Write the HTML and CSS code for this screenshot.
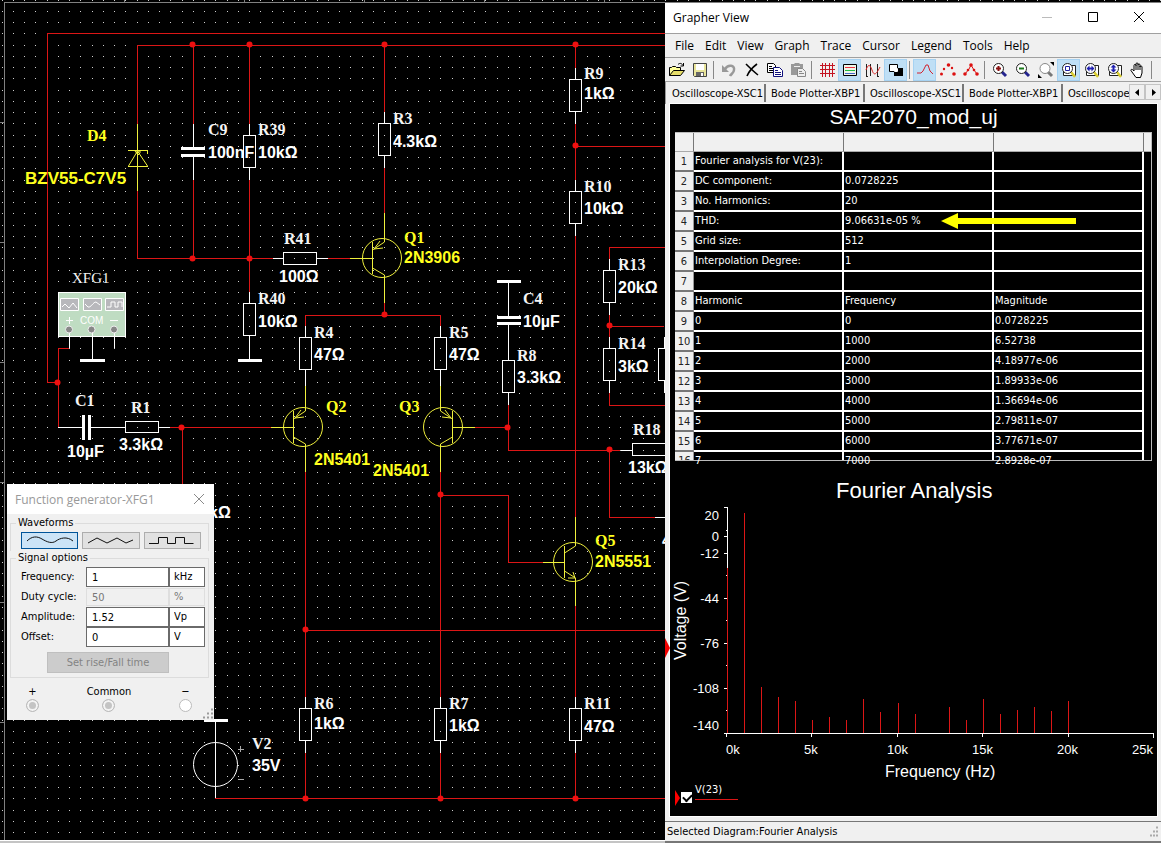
FILE: index.html
```html
<!DOCTYPE html>
<html lang="en">
<head>
<meta charset="utf-8">
<title>Grapher View</title>
<link rel="stylesheet" href="styles.css">
</head>
<body>
<main class="desktop">
<svg class="schematic" role="img" aria-label="Circuit schematic">
  <defs>
    <pattern id="dots" x="2" y="0" width="45" height="45" patternUnits="userSpaceOnUse">
      <path class="dot" d="M0 .5h1M11 .5h1M22 .5h1M33 .5h1M0 11.5h1M11 11.5h1M22 11.5h1M33 11.5h1M0 22.5h1M11 22.5h1M22 22.5h1M33 22.5h1M0 33.5h1M11 33.5h1M22 33.5h1M33 33.5h1"/>
    </pattern>
    <g id="res"><path d="M.5 0v11M.5 44v12"/><rect x="-5.500" y="11.500" width="12" height="32" fill="none"/></g>
    <g id="pnp"><circle cx="-2" cy="0" r="19.500"/><path d="M-11.500 -16v32M-34 .5h22M.5 -28v12l-12 8M-11.500 10l12 7v28M-4 -17l-6 8 9 -1"/></g>
    <g id="node"><circle r="3"/></g>
  </defs>
  <rect width="100%" height="100%" fill="url(#dots)"/>
  <path class="sheet" d="M4.500 843V2.500H1161M124.500 0v2M244.500 0v2M364.500 0v2M484.500 0v2M604.500 0v2M0 122.500h4M0 242.500h4M0 362.500h4M0 482.500h4M0 602.500h4M0 722.500h4"/>
  <g class="wire">
    <path d="M665 33.500H47.500V382.500H58M665 45.500H137.500V124M137.500 191v67.500H273M328 258.500h22M193.500 45v79M193.500 180v78M249.500 45v79M249.500 180v112M384.500 45v67M384.500 168v45M575.500 45v23M575.500 124v56M575.500 236v281M575.500 146.500H665"/>
    <path d="M384.500 303v12M305.500 327v-12H440.500v12M69 348.500H58.500V427M170 427.500H273M182.500 427V520M475 427.500h33M508.500 404v46H620M609.500 450v67H656"/>
    <path d="M305.500 472v225M305.500 753v45M440.500 472v225M440.500 753v45M440 495.500h68V562.500h35M575.500 606v91M575.500 753v45M305 630.500H665M215 798.500H665M665 247.500h-55.500v12M609.500 315v22M609.500 393v12H665M609 326.500h55"/>
  </g>
  <g class="part">
    <use href="#res" x="249" y="124"/><use href="#res" x="249" y="292"/><use href="#res" x="384" y="112"/>
    <use href="#res" x="575" y="68"/><use href="#res" x="575" y="180"/><use href="#res" x="305" y="326"/>
    <use href="#res" x="440" y="326"/><use href="#res" x="508" y="349"/><use href="#res" x="609" y="259"/>
    <use href="#res" x="609" y="337"/><use href="#res" x="664" y="337"/><use href="#res" x="305" y="697"/>
    <use href="#res" x="440" y="697"/><use href="#res" x="575" y="697"/>
    <path d="M273 258.500h10M317 258.500h11M58 427.500h24M91 427.500h34M159 427.500h11M621 450.500h11M655 517.500h10M193.500 124v23M193.500 157v23M249.500 346v14M508.500 282v34M508.500 325v25M305.500 380v6M440.500 380v6M215.500 720v78"/>
    <path d="M283.500 252.500h33v12h-33zM125.500 421.500h33v11h-33zM632.500 443.500h40v12h-40z"/>
  </g>
  <path class="plate" d="M181 148.500h24M181 155.500h24M238 360.500h24M497 281.500h24M497 317.500h24M497 323.500h24M83.500 415v25M89.500 415v25M80 360.500h25M204 720.500h24"/>
  <circle class="source" cx="215.500" cy="764.500" r="22"/>
  <path class="polarity" d="M238 749.500h6M240.500 746v6M238 779.500h6"/>
  <g class="active">
    <path class="crisp" d="M137.500 124v67M128 150.500h20M147.500 150v4M128 166.500h20M305.500 386v16M440.500 386v16M384.500 213v18M575.500 590v16"/>
    <path d="M128.500 166l9-15 10 15M135 151h5v2l-2 2z"/>
    <use href="#pnp" x="384" y="258"/><use href="#pnp" x="305" y="427"/>
    <use href="#pnp" transform="translate(441 427) scale(-1 1)"/>
    <circle cx="573" cy="562" r="19.500"/>
    <path d="M564.500 546v32M543 562.500h21M575.500 517v29l-11 7M564.500 571l11 7v14M568 578l7 0-2-6"/>
  </g>
  <g class="nodes">
    <use href="#node" x="192.500" y="44.500"/><use href="#node" x="249.500" y="44.500"/><use href="#node" x="384.500" y="44.500"/><use href="#node" x="575.500" y="44.500"/>
    <use href="#node" x="192.500" y="258.500"/><use href="#node" x="249.500" y="258.500"/><use href="#node" x="575.500" y="145.500"/><use href="#node" x="384.500" y="314.500"/>
    <use href="#node" x="609.500" y="325.500"/><use href="#node" x="57.500" y="382.500"/><use href="#node" x="181.500" y="427.500"/><use href="#node" x="507.500" y="427.500"/>
    <use href="#node" x="609.500" y="449.500"/><use href="#node" x="440.500" y="494.500"/><use href="#node" x="305.500" y="629.500"/>
    <use href="#node" x="305.500" y="798.500"/><use href="#node" x="440.500" y="798.500"/><use href="#node" x="575.500" y="798.500"/>
  </g>
  <g class="generator">
    <rect x="58.500" y="292.500" width="67" height="44" fill="#bfdcc2"/>
    <path class="screen" d="M60.500 298.500h18v12h-18zM83.500 298.500h18v12h-18zM105.500 298.500h18v12h-18z"/>
    <path d="M62 307l3-3 4 4 4-5 4 5M85 304l3 3c3 1 5-5 8-5l4 3M107 307h4v-5h4v5h3v-5h4v5M66 320.500h7M69.500 317v7M110 320.500h8"/>
    <path d="M69.500 331v17M92.500 331v29M114.500 331v17"/>
    <g class="pins"><circle cx="69" cy="329.500" r="3.500"/><circle cx="91.500" cy="329.500" r="3.500"/><circle cx="114" cy="329.500" r="3.500"/></g>
    <text x="80" y="324" class="com">COM</text>
  </g>
  <g class="names">
    <text x="208" y="135">C9</text><text x="258" y="135">R39</text><text x="284" y="244">R41</text><text x="393" y="124">R3</text>
    <text x="584" y="79">R9</text><text x="584" y="192">R10</text><text x="258" y="304">R40</text><text x="314" y="338">R4</text>
    <text x="449" y="338">R5</text><text x="523" y="304">C4</text><text x="517" y="361">R8</text><text x="618" y="270">R13</text>
    <text x="618" y="349">R14</text><text x="633" y="435">R18</text><text x="75" y="406">C1</text><text x="131" y="413">R1</text>
    <text x="314" y="709">R6</text><text x="449" y="709">R7</text><text x="584" y="709">R11</text><text x="252" y="749">V2</text>
    <text x="72" y="283" class="light">XFG1</text>
    <g class="hot"><text x="87" y="141">D4</text><text x="404" y="243">Q1</text><text x="326" y="412">Q2</text><text x="399" y="412">Q3</text><text x="595" y="546">Q5</text></g>
  </g>
  <g class="values">
    <text x="208" y="158">100nF</text><text x="258" y="158">10kΩ</text><text x="279" y="282">100Ω</text><text x="393" y="147">4.3kΩ</text>
    <text x="584" y="99">1kΩ</text><text x="584" y="214">10kΩ</text><text x="258" y="327">10kΩ</text><text x="314" y="360">47Ω</text>
    <text x="449" y="360">47Ω</text><text x="523" y="327">10µF</text><text x="517" y="383">3.3kΩ</text><text x="618" y="293">20kΩ</text>
    <text x="618" y="372">3kΩ</text><text x="628" y="473">13kΩ</text><text x="67" y="457">10µF</text><text x="119" y="450">3.3kΩ</text>
    <text x="209" y="518">kΩ</text><text x="314" y="729">1kΩ</text><text x="449" y="731">1kΩ</text><text x="584" y="732">47Ω</text><text x="252" y="771">35V</text>
    <text x="662" y="546">4</text>
    <g class="hot"><text x="25" y="184" class="wide">BZV55-C7V5</text><text x="404" y="263">2N3906</text><text x="314" y="465">2N5401</text><text x="373" y="476">2N5401</text><text x="595" y="567">2N5551</text></g>
  </g>
</svg>
<div class="scroll-edge"></div>

<section class="panel" aria-label="Function generator">
  <header class="panel-title"><span>Function generator-XFG1</span>
    <button class="bare" aria-label="Close"><svg width="12" height="12"><path d="M1 1l10 10M11 1L1 11" stroke="#8a8a8a" fill="none"/></svg></button>
  </header>
  <div class="panel-body">
    <fieldset class="waves"><legend>Waveforms</legend>
      <div class="wave-row">
        <button class="wave on" aria-label="Sine"><svg width="46" height="9"><path d="M0 5c5-5 10-5 15-2s10 5 14 2 11-5 17 0"/></svg></button>
        <button class="wave" aria-label="Triangle"><svg width="46" height="9"><path d="M0 7l9-5 10 5 10-5 9 5 7-3"/></svg></button>
        <button class="wave" aria-label="Square"><svg width="46" height="9"><path d="M0 7.500h9.500v-6h9v6h8v-6h9v6h9"/></svg></button>
      </div>
    </fieldset>
    <fieldset class="options"><legend>Signal options</legend>
      <div class="field"><label for="freq">Frequency:</label><input id="freq" value="1"><input class="unit" aria-label="Frequency unit" value="kHz"></div>
      <div class="field"><label for="duty">Duty cycle:</label><input id="duty" value="50" disabled><input class="unit" aria-label="Duty unit" value="%" disabled></div>
      <div class="field"><label for="amp">Amplitude:</label><input id="amp" value="1.52"><input class="unit" aria-label="Amplitude unit" value="Vp"></div>
      <div class="field"><label for="offs">Offset:</label><input id="offs" value="0"><input class="unit" aria-label="Offset unit" value="V"></div>
      <button class="rise" disabled>Set rise/Fall time</button>
    </fieldset>
    <div class="terminals">
      <label>+<input type="radio" name="plus" checked></label>
      <label>Common<input type="radio" name="common" checked></label>
      <label>−<input type="radio" name="minus"></label>
    </div>
  </div>
  <svg class="grip" width="12" height="12"><path d="M9 1.500h2M5 5.500h2M9 5.500h2M1 9.500h2M5 9.500h2M9 9.500h2" stroke="#9a9a9a" stroke-width="2"/></svg>
</section>

<section class="grapher" aria-label="Grapher View">
  <header class="titlebar"><h1>Grapher View</h1>
    <button class="bare" aria-label="Minimize"><svg width="12" height="12"><path d="M1 6.500h10" stroke="#bbb"/></svg></button>
    <button class="bare" aria-label="Maximize"><svg width="12" height="12"><path d="M1.500 1.500h9v9h-9z" stroke="#000" fill="none"/></svg></button>
    <button class="bare" aria-label="Close"><svg width="12" height="12"><path d="M1 1l10 10M11 1L1 11" stroke="#000" fill="none"/></svg></button>
  </header>
  <nav class="menu"><button class="bare">File</button><button class="bare">Edit</button><button class="bare">View</button><button class="bare">Graph</button><button class="bare">Trace</button><button class="bare">Cursor</button><button class="bare">Legend</button><button class="bare">Tools</button><button class="bare">Help</button></nav>
  <div class="toolbar">
    <button class="tool" aria-label="Open"><svg viewBox="0 0 16 16"><path d="M.5 13.500v-8h2l1-1h3l1 1h4v3" fill="#ffff9c" stroke="#000"/><path d="M.5 13.500l4-5h11l-4 5z" fill="#e6de6a" stroke="#000"/><path d="M9 2.500c2-2 4-1 5 1M14.500 1v3h-3" fill="none" stroke="#000"/></svg></button>
    <button class="tool" aria-label="Save"><svg viewBox="0 0 16 16"><path d="M1.500 1.500h13v13h-12l-1-1z" fill="#e9e59a" stroke="#444"/><path d="M4 2h8v6H4z" fill="#fff"/><path d="M4 10h8v4H4z" fill="#666"/><path d="M9 11h2v3H9z" fill="#fff"/></svg></button>
    <i class="sep"></i>
    <button class="tool" aria-label="Undo"><svg viewBox="0 0 16 16"><path d="M4 7c3-5 10-4 9 1 0 3-3 4-4 6" fill="none" stroke="#999" stroke-width="2.500"/><path d="M1 3v7h7z" fill="#999"/></svg></button>
    <button class="tool" aria-label="Delete"><svg viewBox="0 0 16 16"><path d="M2 2c4 4 7 7 12 11M13 2C9 5 5 9 3 14" fill="none" stroke="#000" stroke-width="1.600"/></svg></button>
    <button class="tool" aria-label="Copy"><svg viewBox="0 0 16 16"><path d="M.5 1.500h6l2 2v7h-8z" fill="#fff" stroke="#000"/><path d="M2 4.500h3M2 6.500h4M2 8.500h4" stroke="#000"/><path d="M6.500 5.500h6l3 3v6h-9z" fill="#fff" stroke="#10107c"/><path d="M8 8.500h3M8 10.500h6M8 12.500h6" stroke="#10107c"/></svg></button>
    <button class="tool" aria-label="Paste"><svg viewBox="0 0 16 16"><path d="M1 2h3l1-1h4l1 1h3v11H1z" fill="#999"/><path d="M4 4.500h6" stroke="#eee"/><path d="M7.500 6.500h5l3 3v5h-8z" fill="#eee" stroke="#888"/><path d="M9 9.500h3M9 11.500h5" stroke="#888"/></svg></button>
    <i class="sep"></i>
    <button class="tool" aria-label="Grid"><svg viewBox="0 0 16 16"><path d="M3.500 1v14M6.500 1v14M10.500 1v14M13.500 1v14M1 3.500h15M1 7.500h15M1 11.500h15" stroke="#c41422"/></svg></button>
    <button class="tool on" aria-label="Legend"><svg viewBox="0 0 16 16"><path d="M1.500 2.500h13v11h-13z" fill="#eef6e8" stroke="#000"/><path d="M3 5.500h10" stroke="#e34"/><path d="M3 8.500h10" stroke="#2b4"/><path d="M3 11.500h10" stroke="#46c"/></svg></button>
    <button class="tool" aria-label="Cursors"><svg viewBox="0 0 16 16"><path d="M1.500 2v12M5.500 2v12M12.500 2v12M1 14.500h2M12 14.500h2" stroke="#222"/><path d="M1 8c2-6 4-6 6 0s4 5 8-3" fill="none" stroke="#d22"/></svg></button>
    <button class="tool on" aria-label="Black and white"><svg viewBox="0 0 16 16"><path d="M6 6h9v8H6z"/><path d="M1.500 2.500h8v7h-8z" fill="#fff" stroke="#000"/><path d="M6.500 6.500h3v3h-3z" fill="none" stroke="#fff"/></svg></button>
    <i class="sep"></i>
    <button class="tool on" aria-label="Line"><svg viewBox="0 0 16 16"><path d="M0 11h4l2-2 3-6h2l2 6 3 3" fill="none" stroke="#d2232e"/></svg></button>
    <button class="tool" aria-label="Points"><svg viewBox="0 0 16 16" fill="#dc1010"><circle cx="1.500" cy="12" r="1.500"/><circle cx="4" cy="7" r="1.200"/><circle cx="8.500" cy="3" r="1.800"/><circle cx="12" cy="6" r="1.200"/><circle cx="14" cy="12" r="1.800"/></svg></button>
    <button class="tool" aria-label="Line and points"><svg viewBox="0 0 16 16" fill="#dc1010"><path d="M2 12l4-5 2-4 3 5 3 4" fill="none" stroke="#dc1010"/><circle cx="2" cy="12" r="1.800"/><circle cx="5" cy="8" r="1.300"/><circle cx="8" cy="3" r="1.800"/><circle cx="11" cy="8" r="1.300"/><circle cx="14" cy="12" r="1.800"/></svg></button>
    <i class="sep"></i>
    <button class="tool" aria-label="Zoom in"><svg viewBox="0 0 16 16"><path d="M10 10l4 4" stroke="#23238e" stroke-width="3"/><circle cx="6.500" cy="6.500" r="5" fill="#fff" stroke="#222"/><path d="M4 6.500h5M6.500 4v5" stroke="#8a1010" stroke-width="2"/></svg></button>
    <button class="tool" aria-label="Zoom out"><svg viewBox="0 0 16 16"><path d="M10 10l4 4" stroke="#23238e" stroke-width="3"/><circle cx="6.500" cy="6.500" r="5" fill="#fff" stroke="#222"/><path d="M4 6.500h5" stroke="#187818" stroke-width="2"/></svg></button>
    <button class="tool" aria-label="Zoom fit"><svg viewBox="0 0 16 16"><path d="M10 10l4 4" stroke="#777" stroke-width="3"/><circle cx="7" cy="6.500" r="5" fill="#fff" stroke="#888"/><path d="M12 0h4v4zM0 12v4h4z"/></svg></button>
    <button class="tool on" aria-label="Zoom area"><svg viewBox="0 0 16 16"><path d="M2.500 9v4.500h12v-10H11" fill="#fff" stroke="#222"/><path d="M10 10l4 5" stroke="#d8cc30" stroke-width="2.500"/><circle cx="6.500" cy="6.500" r="5" fill="#fff" stroke="#222"/><path d="M4.500 4.500h4v4h-4z" fill="none" stroke="#2020a0"/></svg></button>
    <button class="tool" aria-label="Zoom horizontal"><svg viewBox="0 0 16 16"><path d="M2.500 9v4.500h12v-10H11" fill="#fff" stroke="#222"/><path d="M10 10l4 5" stroke="#d8cc30" stroke-width="2.500"/><circle cx="6.500" cy="6.500" r="5" fill="#fff" stroke="#222"/><path d="M2.500 6.500l3-3v2h2v-2l3 3-3 3v-2h-2v2z" fill="#2020b0"/></svg></button>
    <button class="tool" aria-label="Zoom vertical"><svg viewBox="0 0 16 16"><path d="M2.500 9v4.500h12v-10H11" fill="#fff" stroke="#222"/><path d="M10 10l4 5" stroke="#d8cc30" stroke-width="2.500"/><circle cx="6.500" cy="6.500" r="5" fill="#fff" stroke="#222"/><path d="M6.500 2.500l3 3h-2v2h2l-3 3-3-3h2v-2h-2z" fill="#2020b0"/></svg></button>
    <button class="tool" aria-label="Pan"><svg viewBox="0 0 16 16"><path d="M6 15.500L2 10 .8 8.200C1 7 2.500 7 4 9V3.500c0-1.500 2-1.500 2 0V2c0-1.500 2-1.500 2 0v1c0-1.500 2-1.500 2 0v2c0-1.500 2-1.500 2 0v6l-1.500 4.500zM6 3v5M8 3v5M10 4v4" fill="#fff" stroke="#000"/></svg></button>
    <i class="sep"></i>
  </div>
  <div class="tabs">
    <div class="tab-list"><button class="tab">Oscilloscope-XSC1</button><button class="tab">Bode Plotter-XBP1</button><button class="tab">Oscilloscope-XSC1</button><button class="tab">Bode Plotter-XBP1</button><button class="tab last">Oscilloscope</button></div>
    <button class="step" aria-label="Previous tab"><svg width="5" height="7"><path d="M4 0v7L0 3.500z"/></svg></button><button class="step" aria-label="Next tab"><svg width="5" height="7"><path d="M1 0v7l4-3.500z"/></svg></button>
  </div>
  <div class="view">
    <h2>SAF2070_mod_uj</h2>
    <div class="grid">
      <table>
        <colgroup><col class="c-num"><col class="c-data"><col class="c-data"><col class="c-data"><col></colgroup>
        <thead><tr><th></th><th></th><th></th><th></th><th></th></tr></thead>
        <tbody>
          <tr><th>1</th><td>Fourier analysis for V(23):</td><td></td><td></td></tr>
          <tr><th>2</th><td>DC component:</td><td>0.0728225</td><td></td></tr>
          <tr><th>3</th><td>No. Harmonics:</td><td>20</td><td></td></tr>
          <tr><th>4</th><td>THD:</td><td>9.06631e-05 %</td><td></td></tr>
          <tr><th>5</th><td>Grid size:</td><td>512</td><td></td></tr>
          <tr><th>6</th><td>Interpolation Degree:</td><td>1</td><td></td></tr>
          <tr><th>7</th><td></td><td></td><td></td></tr>
          <tr><th>8</th><td>Harmonic</td><td>Frequency</td><td>Magnitude</td></tr>
          <tr><th>9</th><td>0</td><td>0</td><td>0.0728225</td></tr>
          <tr><th>10</th><td>1</td><td>1000</td><td>6.52738</td></tr>
          <tr><th>11</th><td>2</td><td>2000</td><td>4.18977e-06</td></tr>
          <tr><th>12</th><td>3</td><td>3000</td><td>1.89933e-06</td></tr>
          <tr><th>13</th><td>4</td><td>4000</td><td>1.36694e-06</td></tr>
          <tr><th>14</th><td>5</td><td>5000</td><td>2.79811e-07</td></tr>
          <tr><th>15</th><td>6</td><td>6000</td><td>3.77671e-07</td></tr>
          <tr class="cut"><th><div>16</div></th><td><div>7</div></td><td><div>7000</div></td><td><div>2.8928e-07</div></td></tr>
        </tbody>
      </table>
      <svg class="arrow" width="136" height="16"><path d="M0 8L17 0v5h118v6H17v5z" fill="#ff0"/></svg>
    </div>
    <svg class="chart" viewBox="670 466 487 314" preserveAspectRatio="xMidYMin meet" role="img" aria-label="Fourier Analysis">
      <text x="836" y="498" class="title">Fourier Analysis</text>
      <path class="axis" d="M724 507.500h3.500V733M724 536.500h3M724 553.500h3M724 598.500h3M724 643.500h3M724 688.500h3M726 530.500h1M726 575.500h1M726 620.500h1M726 665.500h1M726 710.500h1M724 733.500h429.500v4M726.500 733v4M811.500 733v4M897.500 733v4M982.500 733v4M1068.500 733v4"/>
      <path class="bars" d="M727.500 568v165M744.500 513v220M761.500 687v46M778.500 697v36M795.500 701v32M812.500 720v13M829.500 717v16M846.500 720v13M863.500 699v34M880.500 712v21M898.500 703v30M915.500 714v19M949.500 707v26M966.500 720v13M983.500 699v34M1000.500 714v19M1017.500 710v23M1034.500 707v26M1051.500 711v22M1068.500 701v32"/>
      <g class="ylab"><text x="719" y="520">20</text><text x="719" y="541">0</text><text x="719" y="558">-12</text><text x="719" y="603">-44</text><text x="719" y="648">-76</text><text x="719" y="693">-108</text><text x="719" y="730">-140</text></g>
      <g class="xlab"><text x="726" y="754">0k</text><text x="804" y="754">5k</text><text x="887" y="754">10k</text><text x="972" y="754">15k</text><text x="1057" y="754">20k</text><text x="1132" y="754">25k</text></g>
      <text x="885" y="777" class="name">Frequency (Hz)</text>
      <text class="name" transform="translate(686 660) rotate(-90)">Voltage (V)</text>
    </svg>
    <div class="legend"><svg width="6" height="16"><path d="M0 0l5 8-5 8z" fill="#f00"/></svg><input type="checkbox" id="v23" checked><label for="v23">V(23)</label></div>
  </div>
  <footer class="status">Selected Diagram:Fourier Analysis
    <svg width="12" height="12"><path d="M7 1.500h2M4 5.500h2M7 5.500h2M1 9.500h2M4 9.500h2M7 9.500h2" stroke="#aaa" stroke-width="2"/></svg>
  </footer>
  <svg class="marker" width="5" height="20"><path d="M0 0l5 10-5 10z" fill="#f00000"/></svg>
</section>
</main>
</body>
</html>
```
FILE: styles.css
```css
* { box-sizing: border-box; }
body { margin: 0; background: #000; color: #000; font: 11px/14px "DejaVu Sans Condensed", "Liberation Sans", sans-serif; }
button, input { font: inherit; color: inherit; padding: 0; margin: 0; border-radius: 0; }
button svg { display: block; }
.bare { background: none; border: 0; }

.desktop { position: relative; display: flex; flex-direction: column; min-height: 100vh; overflow: hidden; }
.schematic { display: block; flex: 1; width: 100%; background: #000; }
.scroll-edge { height: 3px; background: #c4c4c4; border-top: 1px solid #fff; }

.dot { stroke: #d0d0d0; shape-rendering: crispEdges; }
.sheet { stroke: #808080; fill: none; shape-rendering: crispEdges; }
.wire { stroke: #dc1616; fill: none; shape-rendering: crispEdges; }
.part { stroke: #fff; fill: none; shape-rendering: crispEdges; }
.plate { stroke: #fff; stroke-width: 3; shape-rendering: crispEdges; }
.source { stroke: #fff; fill: none; }
.polarity { stroke: #aaa; shape-rendering: crispEdges; }
.active { stroke: #f0f03c; fill: none; }
.crisp { shape-rendering: crispEdges; }
.nodes { fill: #ee1010; }
.generator { stroke: #fff; fill: none; }
.screen { fill: #b8b8bc; }
.pins { fill: #888; stroke: #eee; }
.com { font: 10px "Liberation Sans", sans-serif; fill: #fff; stroke: none; }
.names { font: bold 16px "Liberation Serif", serif; fill: #f4f4f4; }
.light { font-weight: normal; font-size: 15px; }
.values { font: bold 16px "Liberation Sans", sans-serif; fill: #fff; }
.wide { font-size: 17px; }
.hot { fill: #ffff1e; }

.panel { position: absolute; left: 7px; top: 484px; width: 207px; background: #f0f0f0; }
.panel-title { display: flex; align-items: center; justify-content: space-between; height: 30px; padding: 0 9px 0 8px; background: #fff; color: #999; font: 12px "Open Sans", sans-serif; }
.panel-body { padding: 2px 5px 0 3px; }
fieldset { margin: 0; min-width: 0; border: 1px solid #dcdcdc; padding: 0 7px 0 10px; }
legend { padding: 0 2px; margin-left: -5px; line-height: 14px; }
.waves { border-bottom: 0; height: 35px; }
.options { padding-bottom: 4px; }
.wave-row { display: flex; gap: 4px; margin-top: 2px; }
.wave { flex: 1; height: 17px; display: grid; place-items: center; background: #e1e1e1; border: 1px solid #adadad; }
.wave path { fill: none; stroke: #111; }
.wave.on { background: #cce4f7; border: 1px solid #005499; }
.options legend + .field { margin-top: 2px; }
.field { display: grid; grid-template-columns: 65px 83px 36px; align-items: center; height: 20px; margin-right: -3px; }
.field input { width: 100%; height: 20px; background: #fff; border: 1px solid #6a6a6a; padding: 0 5px; }
.field input.unit { padding: 0 0 2px 4px; }
.field input:disabled { background: #f0f0f0; border-color: #dedede; color: #777; height: 18px; }
.rise { display: block; width: 122px; height: 21px; margin: 5px 0 0 26px; background: #ccc; border: 1px solid #bfbfbf; color: #838383; }
.terminals { display: flex; justify-content: space-between; padding: 7px 17px 8px 16px; }
.terminals label { display: flex; flex-direction: column; align-items: center; }
.terminals input { appearance: none; width: 13px; height: 13px; border-radius: 50%; border: 1px solid #bbb; background: #fff; }
.terminals input:checked { background: #c4c4c4; box-shadow: inset 0 0 0 2px #f4f4f4; }
.grip { position: absolute; right: 0; bottom: 0; }

.grapher { position: absolute; left: 665px; right: 0; top: 3px; bottom: 0; display: flex; flex-direction: column; background: #f0f0f0; border-bottom: 2px solid #777; }
.titlebar { display: flex; align-items: center; gap: 34px; height: 31px; flex: none; padding: 0 16px 2px 8px; background: #fff; border-bottom: 1px solid #a0a0a0; }
.titlebar h1 { flex: 1; margin: 0; font: 12px "Open Sans", sans-serif; }
.menu { display: flex; gap: 11px; height: 24px; flex: none; padding: 0 10px; border-bottom: 1px solid #a0a0a0; font: 12px "Open Sans", sans-serif; }
.toolbar { display: flex; align-items: center; height: 24px; flex: none; border-bottom: 1px solid #a0a0a0; }
.tool { width: 23px; height: 22px; flex: none; display: grid; place-items: center; background: none; border: 0; }
.tool svg { width: 16px; height: 16px; }
.tool.on { background: #bfdff5; border: 1px solid #a6d2f2; }
.sep { width: 1px; height: 18px; margin: 0 3px 0 2px; flex: none; background: #888; }
.tabs { display: flex; height: 22px; flex: none; padding: 2px 0 2px 1px; border-left: 1px solid #999; }
.tab-list { flex: 1; min-width: 0; display: flex; }
.tab { width: 99px; flex: none; background: none; border: 0; border-right: 2px solid #777; padding: 2px 0 0 5px; white-space: nowrap; text-align: left; }
.tab.last { width: auto; border: 0; }
.step { width: 16px; height: 16px; flex: none; display: grid; place-items: center; background: #f0f0f0; border: 1px solid #c4c4c4; }

.view { flex: 1; min-height: 0; margin: 0 4px 5px 5px; background: #000; color: #fff; outline: 1px solid #fff; border: 0; }
.view h2 { margin: 0; padding-top: 1px; height: 28px; text-align: center; font: 21px/24px "Liberation Sans", sans-serif; }
.grid { position: relative; height: 329px; margin: 0 5px; border: 1px solid #bbb; border-left: 0; }
.grid table { width: 100%; table-layout: fixed; border-collapse: separate; border-spacing: 0; }
.c-num { width: 19px; }
.c-data { width: 150px; }
thead th { height: 19px; background: #f0f0f0; border-right: 1px solid #777; border-bottom: 1px solid #aaa; padding: 0; }
thead th:last-child { border-right: 0; }
tbody th { height: 20px; padding: 2px 0 0; background: #f0f0f0; color: #222; font-weight: normal; border-right: 1px solid #999; border-bottom: 2px solid #777; }
tbody td { height: 20px; padding: 2px 0 2px 1px; line-height: 14px; border-right: 2px solid #fff; border-bottom: 2px solid #fff; }
.cut td, .cut th { height: 8px; padding: 0 0 0 1px; border-bottom: 0; }
.cut div { height: 8px; line-height: 17px; }
.cut th div { overflow: hidden; }
.arrow { position: absolute; left: 266px; top: 80px; }
.chart { display: block; width: 100%; margin-top: 5px; }
.chart text { font-family: "Liberation Sans", sans-serif; fill: #fff; font-size: 13px; }
.chart .title { font-size: 22px; }
.chart .name { font-size: 16px; }
.axis { stroke: #fff; fill: none; shape-rendering: crispEdges; }
.bars { stroke: #dc1616; shape-rendering: crispEdges; }
.ylab { text-anchor: end; }
.legend { display: flex; align-items: flex-end; padding: 3px 5px 0; }
.legend input { appearance: none; width: 11px; height: 11px; margin-bottom: 3px; background: #fff; }
.legend input:checked::after { content: ""; display: block; width: 7px; height: 4px; margin: 2px; border: solid #000; border-width: 0 0 2px 2px; transform: rotate(-45deg); }
.legend label { width: 43px; height: 17px; margin: 0 0 6px 3px; border-bottom: 1px solid #dc1616; }
.status { display: flex; align-items: center; justify-content: space-between; height: 20px; flex: none; padding: 1px 0 0 2px; border-top: 1px solid #777; }
.marker { position: absolute; left: 0; top: 635px; }
```
